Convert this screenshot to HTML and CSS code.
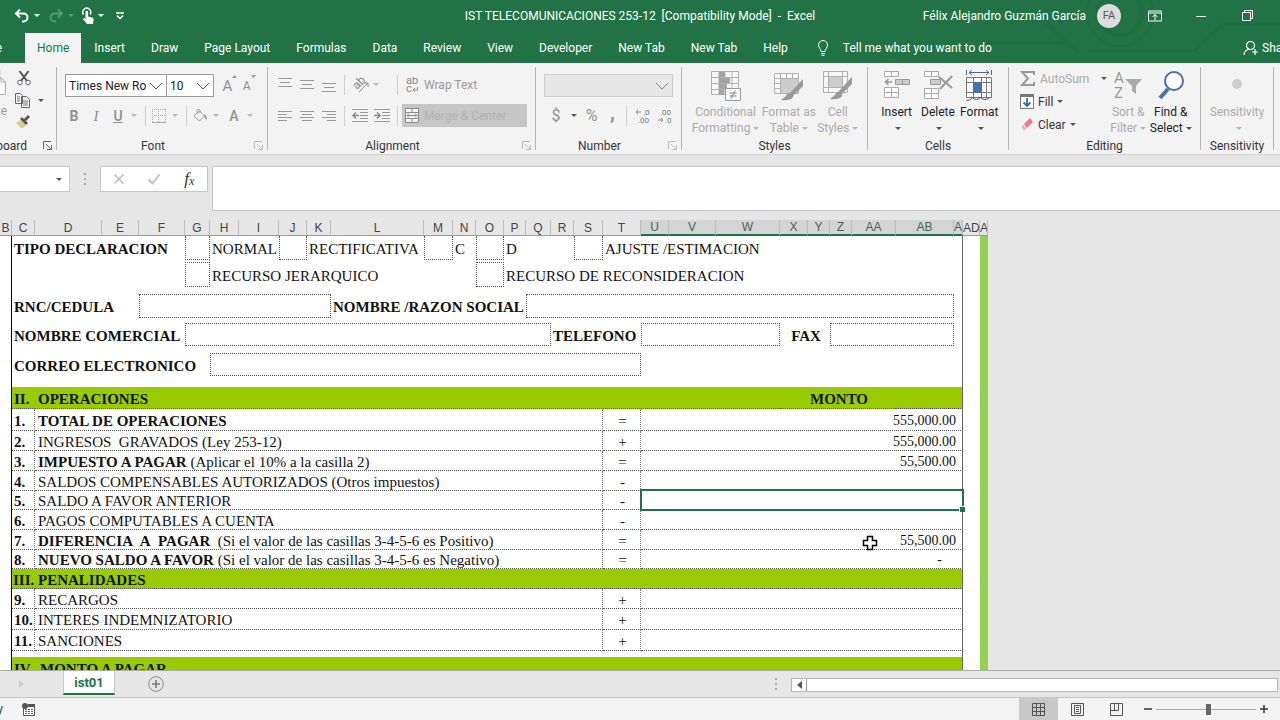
FILE: index.html
```html
<!DOCTYPE html>
<html lang="en">

<head>
    <meta charset="UTF-8">
    <meta name="viewport" content="width=device-width, initial-scale=1.0">
    <title>IST TELECOMUNICACIONES 253-12</title>
    <link rel="stylesheet" href="styles.css">
</head>

<body>
    <header class="top">
        <svg class="pattern" width="380" height="63" viewBox="0 0 380 63" aria-hidden="true">
            <g fill="none" stroke="#1f6e42" stroke-width="3">
                <circle cx="220" cy="13" r="33" stroke-width="2" />
                <circle cx="220" cy="13" r="22" stroke-width="4" />
                <path d="M80 43h85M188 51h105l30-27h57M145 22l32 30" />
            </g>
        </svg>
        <div class="titlebar">
            <div class="quick">
                <button type="button" class="q-btn" aria-label="Undo"><svg width="16" height="16" viewBox="0 0 16 16"><path d="M6 1.500L2 5.500l4 4M2 5.500h7.500a4 4 0 0 1 0 8H8" fill="none" stroke="#fff" stroke-width="2" /></svg></button>
                <i class="caret light"></i>
                <button type="button" class="q-btn faded" aria-label="Redo"><svg width="16" height="16" viewBox="0 0 16 16"><path d="M10 1.500l4 4-4 4M14 5.500H6.500a4 4 0 0 0 0 8H8" fill="none" stroke="#fff" stroke-width="2" /></svg></button>
                <i class="caret light faded"></i>
                <button type="button" class="q-btn touch" aria-label="Touch/Mouse Mode"><svg width="14" height="18" viewBox="0 0 14 18"><path d="M2.500 7.500a4 4 0 1 1 6.500 0" fill="none" stroke="#fff" stroke-width="1.500" /><path d="M4.500 5a1.300 1.300 0 0 1 2.600 0v4.500l4.500 1.200q1.200.4 1 1.800L12 17H6L2 12l1-1 1.500 1z" fill="#fff" /></svg></button>
                <i class="caret light"></i>
                <button type="button" class="q-btn" aria-label="Customize Quick Access Toolbar"><svg width="10" height="8" viewBox="0 0 10 8"><path d="M1 1h8M2 3.500l3 3 3-3" fill="none" stroke="#fff" stroke-width="1.300" /></svg></button>
            </div>
            <div class="title">IST TELECOMUNICACIONES 253-12&nbsp; [Compatibility Mode]&nbsp; -&nbsp; Excel</div>
            <div class="window">
                <span class="user">Félix Alejandro Guzmán García</span>
                <span class="avatar">FA</span>
                <button type="button" class="win-btn" aria-label="Ribbon Display Options"><svg width="14" height="12" viewBox="0 0 14 12"><path d="M.5 1h13v10H.500zM.5 3h13M7 10V4.500M4.500 7L7 4.500 9.500 7" fill="none" stroke="#fff" /></svg></button>
                <button type="button" class="win-btn" aria-label="Minimize"><svg width="10" height="10" viewBox="0 0 10 10"><path d="M0 5.500h10" stroke="#fff" /></svg></button>
                <button type="button" class="win-btn" aria-label="Restore Down"><svg width="11" height="11" viewBox="0 0 11 11"><path d="M.5 2.500h8v8h-8zM2.500 2.500v-2h8v8h-2" fill="none" stroke="#fff" /></svg></button>
            </div>
        </div>
        <nav class="tabs">
            <button type="button" class="tab file">File</button>
            <button type="button" class="tab active">Home</button>
            <button type="button" class="tab">Insert</button>
            <button type="button" class="tab">Draw</button>
            <button type="button" class="tab">Page Layout</button>
            <button type="button" class="tab">Formulas</button>
            <button type="button" class="tab">Data</button>
            <button type="button" class="tab">Review</button>
            <button type="button" class="tab">View</button>
            <button type="button" class="tab">Developer</button>
            <button type="button" class="tab">New Tab</button>
            <button type="button" class="tab">New Tab</button>
            <button type="button" class="tab">Help</button>
            <button type="button" class="tab tell"><svg width="12" height="16" viewBox="0 0 12 16"><path d="M4 11.500C4 9 1.500 8 1.500 5a4.500 4.500 0 0 1 9 0c0 3-2.500 4-2.500 6.500zM4 13.500h4M4.500 15.300h3" fill="none" stroke="#fff" /></svg>Tell me what you want to do</button>
            <button type="button" class="share"><svg width="16" height="16" viewBox="0 0 16 16"><path d="M1 15c0-3 1.500-4.500 4-5.500M3.500 5.500a4 4 0 1 1 8 0c0 2-1.500 4-4 4s-4-2-4-4zM12 9v6M9 12h6" fill="none" stroke="#fff" stroke-width="1.200" /></svg>Share</button>
        </nav>
    </header>

    <section class="ribbon">
        <div class="group clipboard">
            <div class="clip-body">
                <button type="button" class="paste"><svg width="18" height="30" viewBox="0 0 18 30"><path d="M5 8.500h7l4.500 4.500v12.500H5z" fill="#fafafa" stroke="#aaa" /><path d="M12 8.500V13h4.500" fill="none" stroke="#aaa" /><path d="M0 1h12v5H0z" fill="#ddd" /></svg>Paste</button>
                <div class="clip-col">
                    <button type="button" aria-label="Cut"><svg width="16" height="15" viewBox="-2 0 16 15"><path d="M2.500 0L10 10M11.500 0L4 10" stroke="#555" stroke-width="2" /><circle cx="3" cy="11.500" r="2.300" fill="none" stroke="#667" /><circle cx="11" cy="11.500" r="2.300" fill="none" stroke="#667" /></svg></button>
                    <button type="button" aria-label="Copy"><svg width="16" height="15" viewBox="0 0 16 15"><path d="M.5.500h5l2 2v8h-7zM6.500 3.500h5l3 3v8h-8z" fill="#f5f5f5" stroke="#666" /><path d="M2 4h3M2 6h3M2 8h3M8 8h5M8 10h5M8 12h5" stroke="#777" /></svg><i class="caret"></i></button>
                    <button type="button" aria-label="Format Painter"><svg width="16" height="14" viewBox="0 0 16 14"><path d="M1 8l5-3 5 5-3 3H6z" fill="#ddcb83" /><path d="M5 4l2-2 6 6-2 2zM9 4l4-4 2 2-4 4z" fill="#555" /></svg></button>
                </div>
            </div>
            <div class="group-name">Clipboard<svg class="launcher" width="9" height="9" viewBox="0 0 9 9"><path d="M.5 8V.500H8M3 3l5 5M8.500 4v4.500H4" fill="none" stroke="#666" /></svg></div>
        </div>

        <div class="group font has-launcher">
            <div class="line boxes">
                <select class="box font-name" aria-label="Font"><option>Times New Roman</option></select>
                <select class="box font-size" aria-label="Font Size"><option>10</option></select>
                <button type="button" class="tool grow" aria-label="Increase Font Size">A<svg width="5" height="4" viewBox="0 0 5 4"><path d="M0 3l2.500-3L5 3z" fill="#999" /></svg></button>
                <button type="button" class="tool shrink" aria-label="Decrease Font Size">A<svg width="5" height="4" viewBox="0 0 5 4"><path d="M0 0l2.500 3L5 0z" fill="#999" /></svg></button>
            </div>
            <div class="line">
                <button type="button" class="tool bold">B</button>
                <button type="button" class="tool italic">I</button>
                <button type="button" class="tool under">U</button>
                <i class="caret dim"></i>
                <i class="rule"></i>
                <button type="button" class="tool" aria-label="Borders"><svg width="14" height="14" viewBox="0 0 14 14"><path d="M0 .5h14M0 6.500h14M.5 0v14M6.500 0v14M13.500 0v14" stroke="#aaa" stroke-dasharray="1 1" /><path d="M0 13.500h14" stroke="#aaa" /></svg></button>
                <i class="caret dim"></i>
                <i class="rule"></i>
                <button type="button" class="tool" aria-label="Fill Color"><svg width="15" height="14" viewBox="0 0 15 14"><path d="M1 7l5.500-5 5 5L6.500 12zM4 4V1q1.500-2 3 0v3" fill="none" stroke="#999" /><path d="M11 5q4 2 2.500 6Q11 9 11 5z" fill="#999" /></svg></button>
                <i class="caret dim"></i>
                <button type="button" class="tool fontcolor">A</button>
                <i class="caret dim"></i>
            </div>
            <div class="group-name">Font<svg class="launcher" width="9" height="9" viewBox="0 0 9 9"><path d="M.5 8V.500H8M3 3l5 5M8.500 4v4.500H4" fill="none" stroke="#bbb" /></svg></div>
        </div>

        <div class="group alignment has-launcher">
            <div class="line">
                <button type="button" class="tool" aria-label="Top Align"><svg width="14" height="15" viewBox="0 0 14 15"><path d="M0 1.500h14M2 5.500h10M0 9.500h14" stroke="#999" /></svg></button>
                <button type="button" class="tool" aria-label="Middle Align"><svg width="14" height="15" viewBox="0 0 14 15"><path d="M0 3.500h14M2 7.500h10M0 11.500h14" stroke="#999" /></svg></button>
                <button type="button" class="tool" aria-label="Bottom Align"><svg width="14" height="15" viewBox="0 0 14 15"><path d="M0 6.500h14M2 10.500h10M0 14.500h14" stroke="#999" /></svg></button>
                <i class="rule"></i>
                <button type="button" class="tool" aria-label="Orientation"><svg width="17" height="16" viewBox="0 0 17 16"><text transform="translate(5 13) rotate(-45)" font-size="12" fill="#888">ab</text><path d="M7 15l9-9M12 6h4v4" fill="none" stroke="#888" /></svg></button>
                <i class="caret dim"></i>
                <i class="rule far"></i>
                <button type="button" class="wrap"><svg width="13" height="16" viewBox="0 0 13 16"><text x="0" y="7" font-size="11" fill="#888">ab</text><text x="0" y="15" font-size="11" fill="#888">c</text><path d="M11.500 10v3H7.500M9 11l-2 2 2 2" fill="none" stroke="#888" /></svg>Wrap Text</button>
            </div>
            <div class="line">
                <button type="button" class="tool" aria-label="Align Left"><svg width="14" height="12" viewBox="0 0 14 12"><path d="M0 1.500h14M0 4.500h9M0 7.500h14M0 10.500h9" stroke="#999" /></svg></button>
                <button type="button" class="tool" aria-label="Center"><svg width="14" height="12" viewBox="0 0 14 12"><path d="M0 1.500h14M2 4.500h10M0 7.500h14M2 10.500h10" stroke="#999" /></svg></button>
                <button type="button" class="tool" aria-label="Align Right"><svg width="14" height="12" viewBox="0 0 14 12"><path d="M0 1.500h14M5 4.500h9M0 7.500h14M5 10.500h9" stroke="#999" /></svg></button>
                <i class="rule"></i>
                <button type="button" class="tool" aria-label="Decrease Indent"><svg width="16" height="13" viewBox="0 0 16 13"><path d="M0 .5h16M8 3.500h8M8 6.500h8M8 9.500h8M0 12.500h16" stroke="#999" /><path d="M7 6.500H1M4 3.500l-3 3 3 3" fill="none" stroke="#888" stroke-width="1.500" /></svg></button>
                <button type="button" class="tool" aria-label="Increase Indent"><svg width="16" height="13" viewBox="0 0 16 13"><path d="M0 .5h16M8 3.500h8M8 6.500h8M8 9.500h8M0 12.500h16" stroke="#999" /><path d="M0 6.500h6M3 3.500l3 3-3 3" fill="none" stroke="#888" stroke-width="1.500" /></svg></button>
                <i class="rule"></i>
                <button type="button" class="merge"><svg width="14" height="15" viewBox="0 0 14 15"><path d="M.5.500h13v14H.500zM.5 4.500h13M.5 10.500h13M7 .5v4M7 10.500v4" fill="#f5f5f5" stroke="#8a8a8a" /><path d="M2 7.500h10M4 5.500l-2 2 2 2M10 5.500l2 2-2 2" fill="none" stroke="#8a8a8a" /></svg>Merge &amp; Center</button>
            </div>
            <div class="group-name">Alignment<svg class="launcher" width="9" height="9" viewBox="0 0 9 9"><path d="M.5 8V.500H8M3 3l5 5M8.500 4v4.500H4" fill="none" stroke="#bbb" /></svg></div>
        </div>

        <div class="group number has-launcher">
            <div class="line boxes">
                <select class="box format" aria-label="Number Format" disabled><option></option></select>
            </div>
            <div class="line">
                <button type="button" class="tool sign">$</button>
                <i class="caret"></i>
                <button type="button" class="tool sign">%</button>
                <button type="button" class="tool comma">,</button>
                <i class="rule"></i>
                <button type="button" class="tool" aria-label="Increase Decimal"><svg width="15" height="14" viewBox="0 0 15 14"><text x="8" y="6" font-size="8" fill="#777">.0</text><text x="3" y="14" font-size="8" fill="#777">.00</text><path d="M6 3H1M3 1L1 3l2 2" fill="none" stroke="#888" /></svg></button>
                <button type="button" class="tool" aria-label="Decrease Decimal"><svg width="15" height="14" viewBox="0 0 15 14"><text x="3" y="6" font-size="8" fill="#777">.00</text><text x="8" y="14" font-size="8" fill="#777">.0</text><path d="M1 11h5M4 9l2 2-2 2" fill="none" stroke="#888" /></svg></button>
            </div>
            <div class="group-name">Number<svg class="launcher" width="9" height="9" viewBox="0 0 9 9"><path d="M.5 8V.500H8M3 3l5 5M8.500 4v4.500H4" fill="none" stroke="#bbb" /></svg></div>
        </div>

        <div class="group styles">
            <div class="bigs">
                <button type="button" class="big dim wide"><svg width="30" height="31" viewBox="0 0 30 31"><path d="M.5 1.500h27v23H.500zM.5 7.500h27M.5 13.500h27M.5 19.500h27M8 1.500v23M14 1.500v23M21 1.500v23" fill="#f8f8f8" stroke="#b0b0b0" /><path d="M8 2h6v5H8zM8 8h11v5H8zM8 14h8v5H8zM8 20h5v5H8z" fill="#a4a4a4" /><path d="M14.500 18.500h15v12h-15z" fill="#f8f8f8" stroke="#999" /><path d="M18.500 23h7M18.500 26h7M24 20.500l-4 8" stroke="#888" /></svg><span>Conditional<br>Formatting<i class="caret dim"></i></span></button>
                <button type="button" class="big dim"><svg width="30" height="31" viewBox="0 0 30 31"><path d="M.5 3.500h24v20H.500zM.5 8.500h24M.5 13.500h24M.5 18.500h24M6.500 3.500v20M12.500 3.500v20M18.500 3.500v20" fill="#f8f8f8" stroke="#b0b0b0" /><path d="M7 9h17v14H7z" fill="#ccc" /><path d="M29 9v7l-11 11-3-3z" fill="#999" /><path d="M14 23q5 0 5 4-3 4-12 3 4-2 7-7z" fill="#999" /></svg><span>Format as<br>Table<i class="caret dim"></i></span></button>
                <button type="button" class="big dim slim"><svg width="30" height="31" viewBox="0 0 30 31"><path d="M.5 1.500h24v21H.500zM.5 6.500h24M.5 17.500h24M5.500 1.500v21M19.500 1.500v21" fill="#f8f8f8" stroke="#b0b0b0" /><path d="M6 7h13v10H6z" fill="#ccc" /><path d="M29 7v7L18 25l-3-3z" fill="#999" /><path d="M14 22q5 0 5 4-3 4-12 3 4-2 7-7z" fill="#999" /></svg><span>Cell<br>Styles<i class="caret dim"></i></span></button>
            </div>
            <div class="group-name">Styles</div>
        </div>

        <div class="group cells">
            <div class="bigs">
                <button type="button" class="big slim"><svg width="28" height="31" viewBox="0 0 28 31"><path d="M1.500 1.500h14v5h-14zM8.500 1.500v5M1.500 17.500h14v10h-14zM1.500 22.500h14M8.500 17.500v10" fill="#fff" stroke="#aaa" /><path d="M12.500 9.500h14v5h-14z" fill="#ccc" stroke="#999" /><path d="M19.500 9.500v5" stroke="#999" /><path d="M9 12H3M5.500 9L2.500 12l3 3" fill="none" stroke="#999" stroke-width="1.500" /></svg><span>Insert<br><i class="caret"></i></span></button>
                <button type="button" class="big slim"><svg width="30" height="31" viewBox="0 0 30 31"><path d="M1.500 1.500h14v5h-14zM8.500 1.500v5M1.500 18.500h14v10h-14zM1.500 23.500h14M8.500 18.500v10" fill="#fff" stroke="#aaa" /><path d="M7.500 9.500h10v5h-10z" fill="#ccc" stroke="#999" /><path d="M16 7l13 11M29 6L17 19" stroke="#999" stroke-width="2" /></svg><span>Delete<br><i class="caret"></i></span></button>
                <button type="button" class="big slim"><svg width="28" height="31" viewBox="0 0 28 31"><path d="M1.500 0v5M26.500 0v5M4 2.500h20M7 0L4 2.500 7 5M21 0l3 2.500L21 5" fill="none" stroke="#44689c" /><path d="M1.500 7.500h25v20h-25zM1.500 12.500h25M1.500 22.500h25M8.500 7.500v20M16.500 7.500v20M21.500 7.500v20" fill="#fff" stroke="#777" /><path d="M8 12h9v11H8z" fill="#4472b0" /><path d="M1.500 30.500q5 0 6-3 4 4 8 0 4 4 9 0" fill="none" stroke="#555" /></svg><span>Format<br><i class="caret"></i></span></button>
            </div>
            <div class="group-name">Cells</div>
        </div>

        <div class="group editing">
            <div class="edit-body">
                <div class="edit-col">
                    <button type="button" class="row-btn dim"><svg width="16" height="15" viewBox="0 0 16 15"><path d="M14 4V1H2l6 6.500L2 14h12v-3" fill="none" stroke="#999" stroke-width="2" /></svg>AutoSum<i class="caret"></i></button>
                    <button type="button" class="row-btn"><svg width="14" height="15" viewBox="0 0 14 15"><path d="M.5.500h13v14H.500z" fill="#fff" stroke="#777" /><path d="M0 0h14v3H0z" fill="#777" /><path d="M7 4v8M3.500 8.500L7 12l3.500-3.500" fill="none" stroke="#3a679f" stroke-width="1.800" /></svg>Fill<i class="caret"></i></button>
                    <button type="button" class="row-btn"><svg width="14" height="13" viewBox="0 0 14 13"><path d="M4 6l6-6 3 4-6 6z" fill="#e8798f" /><path d="M3.500 6.500l3 4L4 12.500 1.500 9z" fill="#f2b4bf" /></svg>Clear<i class="caret"></i></button>
                </div>
                <button type="button" class="big dim slim"><svg width="30" height="31" viewBox="0 0 30 31"><text x="1" y="13" font-size="15" fill="#999">A</text><text x="1" y="28" font-size="15" fill="#999">Z</text><path d="M12 9h17l-6 7v8l-4-3v-5z" fill="#aaa" /></svg><span>Sort &amp;<br>Filter<i class="caret dim"></i></span></button>
                <button type="button" class="big slim"><svg width="28" height="31" viewBox="0 0 28 31"><path d="M11 19L3 28" stroke="#4a6fa5" stroke-width="4" /><circle cx="17" cy="11" r="9" fill="#fdfdfd" stroke="#4a6fa5" stroke-width="2" /></svg><span>Find &amp;<br>Select<i class="caret"></i></span></button>
            </div>
            <div class="group-name">Editing</div>
        </div>

        <div class="group sensitivity">
            <div class="bigs">
                <button type="button" class="big dim wide"><svg width="28" height="31" viewBox="0 0 28 31"><circle cx="14" cy="14" r="5" fill="#ccc" /></svg><span>Sensitivity<br><i class="caret dim"></i></span></button>
            </div>
            <div class="group-name">Sensitivity</div>
        </div>
    </section>

    <section class="formula">
        <div class="namebox"><input type="text" aria-label="Name Box"><i class="caret"></i></div>
        <i class="dots"></i>
        <div class="fx">
            <button type="button" aria-label="Cancel"><svg width="12" height="12" viewBox="0 0 12 12"><path d="M1.500 1.500l9 9M10.500 1.500l-9 9" stroke="#bbb" stroke-width="1.500" /></svg></button>
            <button type="button" aria-label="Enter"><svg width="14" height="12" viewBox="0 0 14 12"><path d="M1.500 6.500l4 4 7-9" fill="none" stroke="#bbb" stroke-width="1.800" /></svg></button>
            <button type="button" class="fn">f<small>x</small></button>
        </div>
        <textarea class="formula-text" aria-label="Formula Bar"></textarea>
    </section>

    <main class="sheet">
        <table class="grid">
            <colgroup>
                <col class="w12"><col class="w23"><col class="w67"><col class="w37"><col class="w46"><col class="w25">
                <col class="w29"><col class="w40"><col class="w28"><col class="w24"><col class="w93"><col class="w29">
                <col class="w23"><col class="w28"><col class="w22"><col class="w25"><col class="w23"><col class="w29">
                <col class="w38"><col class="w28"><col class="w47"><col class="w64"><col class="w28"><col class="w22">
                <col class="w22"><col class="w44"><col class="w58"><col class="w9"><col class="w17"><col class="w8">
            </colgroup>
            <thead>
                <tr>
                    <th>B</th><th>C</th><th>D</th><th>E</th><th>F</th><th>G</th><th>H</th><th>I</th><th>J</th><th>K</th>
                    <th>L</th><th>M</th><th>N</th><th>O</th><th>P</th><th>Q</th><th>R</th><th>S</th><th>T</th>
                    <th class="sel">U</th><th class="sel">V</th><th class="sel">W</th><th class="sel">X</th><th class="sel">Y</th>
                    <th class="sel">Z</th><th class="sel">AA</th><th class="sel">AB</th><th class="sel cut">AC</th>
                    <th>AD</th><th class="cut">AE</th>
                </tr>
            </thead>
            <tbody>
                <!-- I. Datos generales -->
                <tr class="h24">
                    <td class="edge"></td><td colspan="4" class="b">TIPO DECLARACION</td><td class="bx open"></td>
                    <td colspan="2">NORMAL</td><td class="bx open"></td><td colspan="2">RECTIFICATIVA</td><td class="bx open"></td>
                    <td>C</td><td class="bx open"></td><td colspan="3">D</td><td class="bx open"></td>
                    <td colspan="10" class="last">AJUSTE /ESTIMACION</td><td></td><td class="strip"></td>
                </tr>
                <tr class="h2"><td class="edge"></td><td colspan="27" class="last"></td><td></td><td class="strip"></td></tr>
                <tr class="h25">
                    <td class="edge"></td><td colspan="4"></td><td class="bx"></td><td colspan="7">RECURSO JERARQUICO</td>
                    <td class="bx"></td><td colspan="14" class="last">RECURSO DE RECONSIDERACION</td><td></td><td class="strip"></td>
                </tr>
                <tr class="h7"><td class="edge"></td><td colspan="27" class="last"></td><td></td><td class="strip"></td></tr>
                <tr class="h24">
                    <td class="edge"></td><td colspan="3" class="b">RNC/CEDULA</td><td colspan="6" class="bx"></td>
                    <td colspan="5" class="b">NOMBRE /RAZON SOCIAL</td><td colspan="12" class="bx"></td><td class="last"></td>
                    <td></td><td class="strip"></td>
                </tr>
                <tr class="h5"><td class="edge"></td><td colspan="27" class="last"></td><td></td><td class="strip"></td></tr>
                <tr class="h23">
                    <td class="edge"></td><td colspan="4" class="b">NOMBRE COMERCIAL</td><td colspan="11" class="bx"></td>
                    <td colspan="3" class="b">TELEFONO</td><td colspan="3" class="bx"></td><td colspan="2" class="b mid">FAX</td>
                    <td colspan="3" class="bx"></td><td class="last"></td><td></td><td class="strip"></td>
                </tr>
                <tr class="h7"><td class="edge"></td><td colspan="27" class="last"></td><td></td><td class="strip"></td></tr>
                <tr class="h23">
                    <td class="edge"></td><td colspan="5" class="b">CORREO ELECTRONICO</td><td colspan="13" class="bx"></td>
                    <td colspan="9" class="last"></td><td></td><td class="strip"></td>
                </tr>
                <tr class="h11"><td class="edge"></td><td colspan="27" class="last"></td><td></td><td class="strip"></td></tr>

                <!-- II. Operaciones -->
                <tr class="h22 band">
                    <td class="edge"></td><td class="g b">II.</td><td colspan="20" class="g b l">OPERACIONES</td>
                    <td colspan="4" class="g b mid">MONTO</td><td colspan="2" class="g last"></td><td></td><td class="strip"></td>
                </tr>
                <tr class="h22 item"><td class="edge"></td><td class="n">1.</td><td colspan="16" class="l"><b>TOTAL DE OPERACIONES</b></td><td class="o">=</td><td colspan="9" class="v last">555,000.00</td><td></td><td class="strip"></td></tr>
                <tr class="h20 item"><td class="edge"></td><td class="n">2.</td><td colspan="16" class="l">INGRESOS&nbsp; GRAVADOS (Ley 253-12)</td><td class="o">+</td><td colspan="9" class="v last">555,000.00</td><td></td><td class="strip"></td></tr>
                <tr class="h20 item"><td class="edge"></td><td class="n">3.</td><td colspan="16" class="l"><b>IMPUESTO A PAGAR</b> (Aplicar el 10% a la casilla 2)</td><td class="o">=</td><td colspan="9" class="v last">55,500.00</td><td></td><td class="strip"></td></tr>
                <tr class="h20 item"><td class="edge"></td><td class="n">4.</td><td colspan="16" class="l">SALDOS COMPENSABLES AUTORIZADOS (Otros impuestos)</td><td class="o">-</td><td colspan="9" class="v last"></td><td></td><td class="strip"></td></tr>
                <tr class="h19 item"><td class="edge"></td><td class="n">5.</td><td colspan="16" class="l">SALDO A FAVOR ANTERIOR</td><td class="o">-</td><td colspan="9" class="v last selected"></td><td></td><td class="strip"></td></tr>
                <tr class="h20 item"><td class="edge"></td><td class="n">6.</td><td colspan="16" class="l">PAGOS COMPUTABLES A CUENTA</td><td class="o">-</td><td colspan="9" class="v last"></td><td></td><td class="strip"></td></tr>
                <tr class="h20 item"><td class="edge"></td><td class="n">7.</td><td colspan="16" class="l"><b>DIFERENCIA&nbsp; A&nbsp; PAGAR</b>&nbsp; (Si el valor de las casillas 3-4-5-6 es Positivo)</td><td class="o">=</td><td colspan="9" class="v last">55,500.00</td><td></td><td class="strip"></td></tr>
                <tr class="h19 item"><td class="edge"></td><td class="n">8.</td><td colspan="16" class="l"><b>NUEVO SALDO A FAVOR</b> (Si el valor de las casillas 3-4-5-6 es Negativo)</td><td class="o">=</td><td colspan="9" class="v last zero">-</td><td></td><td class="strip"></td></tr>

                <!-- III. Penalidades -->
                <tr class="h20 band"><td class="edge"></td><td class="g b tight">III.</td><td colspan="26" class="g b l last">PENALIDADES</td><td></td><td class="strip"></td></tr>
                <tr class="h20 item"><td class="edge"></td><td class="n">9.</td><td colspan="16" class="l">RECARGOS</td><td class="o">+</td><td colspan="9" class="v last"></td><td></td><td class="strip"></td></tr>
                <tr class="h21 item"><td class="edge"></td><td class="n">10.</td><td colspan="16" class="l">INTERES INDEMNIZATORIO</td><td class="o">+</td><td colspan="9" class="v last"></td><td></td><td class="strip"></td></tr>
                <tr class="h21 item"><td class="edge"></td><td class="n">11.</td><td colspan="16" class="l">SANCIONES</td><td class="o">+</td><td colspan="9" class="v last"></td><td></td><td class="strip"></td></tr>
                <tr class="h6"><td class="edge"></td><td colspan="27" class="last"></td><td></td><td class="strip"></td></tr>

                <!-- IV. Monto a pagar -->
                <tr class="h22 band"><td class="edge"></td><td colspan="27" class="g b last">IV.&nbsp; MONTO A PAGAR</td><td></td><td class="strip"></td></tr>
            </tbody>
        </table>
        <svg class="pointer" width="16" height="16" viewBox="0 0 16 16" aria-hidden="true"><path d="M5.500 1.500h5v4h4v5h-4v4h-5v-4h-4v-5h4z" fill="#fff" stroke="#000" stroke-width="1.500" /></svg>
    </main>

    <section class="sheetbar">
        <button type="button" class="next" aria-label="Next sheet"><svg width="5" height="8" viewBox="0 0 5 8"><path d="M0 0l5 4-5 4z" fill="#ccc" /></svg></button>
        <button type="button" class="sheet-tab">ist01</button>
        <button type="button" class="add" aria-label="New sheet"><svg width="16" height="16" viewBox="0 0 16 16"><circle cx="8" cy="8" r="7.300" fill="none" stroke="#888" /><path d="M4 8h8M8 4v8" stroke="#777" stroke-width="1.500" /></svg></button>
        <div class="scroll-side">
            <i class="dots"></i>
            <div class="scroll">
                <button type="button" aria-label="Scroll left"><svg width="5" height="8" viewBox="0 0 5 8"><path d="M5 0L0 4l5 4z" fill="#555" /></svg></button>
                <div class="thumb"></div>
            </div>
        </div>
    </section>

    <footer class="status">
        <span class="ready">Ready</span>
        <button type="button" class="macro" aria-label="Record Macro"><svg width="13" height="13" viewBox="0 0 13 13"><path d="M1.500 3.500h11v9h-11z" fill="#fff" stroke="#555" /><path d="M6 1h7v3H6z" fill="#555" /><circle cx="3" cy="3" r="3" fill="#555" /><path d="M3 6.500h8M3 8.500h8M3 10.500h8" stroke="#666" stroke-dasharray="2 1" /></svg></button>
        <div class="views">
            <button type="button" class="view on" aria-label="Normal"><svg width="13" height="13" viewBox="0 0 13 13"><path d="M.5.500h12v12H.500zM.5 4.500h12M.5 8.500h12M4.500.500v12M8.500.500v12" fill="none" stroke="#555" /></svg></button>
            <button type="button" class="view" aria-label="Page Layout view"><svg width="13" height="13" viewBox="0 0 13 13"><path d="M.5.500h12v12H.500zM3.500 2.500h6v8h-6zM5 4.500h3M5 6.500h3M5 8.500h3" fill="none" stroke="#555" /></svg></button>
            <button type="button" class="view" aria-label="Page Break Preview"><svg width="13" height="13" viewBox="0 0 13 13"><path d="M.5.500h12v12H.500zM.5 7.500h8v-7M4.500.500v7" fill="none" stroke="#555" /></svg></button>
            <div class="zoom-box">
                <button type="button" class="zoom-btn" aria-label="Zoom out"><svg width="8" height="8" viewBox="0 0 8 8"><path d="M0 4h8" stroke="#333" stroke-width="1.500" /></svg></button>
                <input type="range" class="zoom" min="0" max="100" value="53" aria-label="Zoom">
                <button type="button" class="zoom-btn" aria-label="Zoom in"><svg width="8" height="8" viewBox="0 0 8 8"><path d="M0 4h8M4 0v8" stroke="#333" stroke-width="1.500" /></svg></button>
            </div>
        </div>
    </footer>
</body>

</html>
```

FILE: styles.css
```css
* {
    box-sizing: border-box;
}

body {
    margin: 0;
    height: 100vh;
    display: flex;
    flex-direction: column;
    overflow: hidden;
    font-family: Roboto, "Noto Sans", sans-serif;
    font-size: 12px;
    line-height: 16px;
    color: #333;
    background-color: #e6e6e6;
}

button {
    margin: 0;
    padding: 0;
    border: none;
    background: none;
    font: inherit;
    color: inherit;
    white-space: nowrap;
    display: flex;
    align-items: center;
    justify-content: center;
}

svg {
    display: block;
    flex: none;
}

/* title bar and tabs */
.top {
    position: relative;
    flex: none;
    background-color: #217346;
    color: #fff;
}

.pattern {
    position: absolute;
    right: 0;
    top: 0;
}

.titlebar {
    position: relative;
    height: 33px;
    padding-bottom: 2px;
    display: grid;
    grid-template-columns: 1fr auto 1fr;
    align-items: center;
}

.quick {
    display: flex;
    align-items: center;
    padding-left: 12px;
}

.q-btn {
    width: 20px;
    height: 24px;
}

.q-btn.touch {
    width: 16px;
}

.quick .caret {
    margin: 0 6px 0 2px;
}

.faded {
    opacity: 0.25;
}

.window {
    display: flex;
    align-items: center;
    justify-content: flex-end;
    padding-right: 10px;
}

.avatar {
    width: 24px;
    height: 24px;
    margin: 0 11px 0 11px;
    border-radius: 50%;
    background-color: #dcdcdc;
    color: #555;
    font-size: 11px;
    line-height: 24px;
    text-align: center;
}

.win-btn {
    width: 46px;
    height: 24px;
}

.tabs {
    position: relative;
    height: 30px;
    display: flex;
}

.tab {
    padding: 0 13px;
}

.tab.file {
    width: 25px;
    padding: 0 23px 0 0;
    justify-content: flex-end;
    overflow: hidden;
}

.tab.active {
    padding: 0 12px;
    background-color: #f3f3f3;
    color: #217346;
}

.tab.tell {
    gap: 14px;
    padding-left: 16px;
}

.share {
    flex: none;
    width: 37px;
    margin-left: auto;
    gap: 3px;
    justify-content: flex-start;
    overflow: hidden;
}

.caret {
    flex: none;
    display: inline-block;
    width: 6px;
    height: 3px;
    border: 3px solid transparent;
    border-top-color: #555;
    border-bottom: none;
}

.caret.light {
    border-top-color: #fff;
}

.caret.dim {
    border-top-color: #bbb;
}

/* ribbon */
.ribbon {
    flex: none;
    height: 91px;
    display: flex;
    background-color: #f3f3f3;
    overflow: hidden;
}

.group {
    position: relative;
    flex: none;
    margin: 4px 0;
    padding: 0 8px;
    border-right: 1px solid #b4b4b4;
    display: flex;
    flex-direction: column;
}

.group-name {
    margin: auto 0 -4px;
    text-align: center;
}

.has-launcher .group-name {
    padding-right: 18px;
}

.launcher {
    position: absolute;
    right: 4px;
    bottom: 0;
}

.clipboard {
    width: 57px;
    padding: 0;
    overflow-x: clip;
}

.clip-body {
    display: flex;
    justify-content: flex-end;
}

.paste {
    flex-direction: column;
    align-items: flex-end;
    color: #999;
    gap: 4px;
    padding-bottom: 12px;
}

.clip-col {
    flex: none;
    width: 41px;
    margin-left: 8px;
    display: flex;
    flex-direction: column;
}

.clip-col button {
    height: 22px;
    gap: 7px;
    justify-content: flex-start;
}

.clipboard .group-name {
    display: flex;
    justify-content: flex-end;
    padding-right: 29px;
}

.font {
    width: 211px;
}

.alignment {
    width: 268px;
}

.number {
    width: 146px;
}

.styles {
    width: 186px;
}

.cells {
    width: 141px;
}

.editing {
    width: 192px;
}

.sensitivity {
    width: 73px;
    padding: 0;
}

.line {
    height: 31px;
    display: flex;
    align-items: center;
    margin: 0 -2px;
    padding-top: 4px;
}

.line.boxes {
    margin: 0;
    height: 33px;
}

.line + .line {
    padding-top: 0;
}

.alignment .line:first-child {
    height: 33px;
    padding-top: 2px;
}

.number .line + .line {
    margin-left: 1px;
}

.box {
    height: 23px;
    padding: 0 20px 0 3px;
    border: 1px solid #999;
    border-radius: 0;
    appearance: none;
    background: #fff url("data:image/svg+xml,%3Csvg xmlns='http://www.w3.org/2000/svg' width='14' height='8'%3E%3Cpath d='M1 1l6 6 6-6' fill='none' stroke='%23555'/%3E%3C/svg%3E") no-repeat right 3px center;
    font: inherit;
    color: #222;
    text-overflow: clip;
}

.font-name {
    width: 102px;
}

.font-size {
    width: 51px;
    margin-left: -1px;
}

.format {
    width: 130px;
    background-color: #e3e3e3;
    border-color: #bbb;
    opacity: 0.7;
}

.tool {
    width: 22px;
    height: 22px;
    color: #909090;
}

.grow {
    font-size: 15px;
    margin-left: 6px;
}

.grow svg,
.shrink svg {
    align-self: flex-start;
}

.bold {
    font-size: 14px;
    font-weight: 700;
}

.italic {
    font-family: "Liberation Serif", serif;
    font-style: italic;
    font-size: 15px;
}

.under {
    font-size: 14px;
    font-weight: 500;
    text-decoration: underline;
}

.fontcolor {
    font-weight: 500;
    font-size: 14px;
}

.sign {
    font-size: 16px;
}

.comma {
    font-size: 20px;
    font-weight: 700;
    padding-bottom: 8px;
}

.rule {
    flex: none;
    width: 1px;
    height: 20px;
    margin: 0 4px;
    background-color: #d0d0d0;
}

.font .caret,
.alignment .caret {
    margin: 0 4px 0 2px;
}

.number .caret {
    margin: 0 4px;
}

.number .tool.comma {
    width: 20px;
}

.font .rule {
    margin: 0 2px 0 4px;
}

.rule.far {
    margin: 0 8px 0 14px;
}

.wrap {
    gap: 5px;
    color: #999;
}

.merge {
    width: 125px;
    height: 23px;
    padding-left: 3px;
    gap: 5px;
    justify-content: flex-start;
    background-color: #c6c6c6;
    color: #b2b2b2;
}

.bigs {
    display: flex;
    justify-content: center;
}

.big {
    width: 56px;
    flex-direction: column;
    gap: 3px;
    padding-top: 3px;
    color: #222;
}

.big.wide {
    width: 72px;
}

.big.slim {
    width: 43px;
}

.big .caret {
    margin-left: 3px;
    vertical-align: middle;
}

.big.dim,
.row-btn.dim {
    color: #aaa;
}

.edit-body {
    display: flex;
}

.edit-col {
    width: 90px;
    display: flex;
    flex-direction: column;
}

.row-btn {
    height: 23px;
    gap: 4px;
    padding-left: 3px;
    justify-content: flex-start;
}

.row-btn.dim .caret {
    margin-left: 8px;
}

/* formula bar */
.formula {
    flex: none;
    display: flex;
    align-items: flex-start;
    height: 66px;
    padding-top: 11px;
    border-top: 1px solid #d2d2d2;
}

.namebox {
    width: 70px;
    height: 26px;
    display: flex;
    align-items: center;
    padding-right: 7px;
    background-color: #fff;
    border: 1px solid #c6c6c6;
    border-left: none;
}

.namebox input {
    flex: 1;
    min-width: 0;
    border: none;
    outline: none;
}

.dots {
    flex: none;
    width: 2px;
    height: 12px;
    margin: 7px 14px 0;
    background: repeating-linear-gradient(#aaa 0 2px, transparent 2px 5px);
}

.fx {
    width: 108px;
    height: 26px;
    margin-right: 4px;
    display: flex;
    background-color: #fff;
    border: 1px solid #c6c6c6;
}

.fx button {
    flex: 1;
}

.fn {
    font-family: "Liberation Serif", serif;
    font-style: italic;
    font-size: 17px;
}

.fn small {
    font-size: 12px;
    padding-top: 4px;
}

.formula-text {
    flex: 1;
    height: 45px;
    border: 1px solid #c6c6c6;
    border-right: none;
    outline: none;
    resize: none;
}

/* sheet */
.sheet {
    position: relative;
    flex: 1;
    min-height: 0;
    overflow: hidden;
}

.grid {
    table-layout: fixed;
    width: 988px;
    border-collapse: separate;
    border-spacing: 0;
    background-color: #fff;
    font-family: "Liberation Serif", "Times New Roman", serif;
    font-size: 15px;
    line-height: 16px;
    color: #111;
}

.grid th {
    height: 16px;
    padding: 0;
    background-color: #e6e6e6;
    border-right: 1px solid #bcbcbc;
    border-bottom: 1px solid #9a9a9a;
    font-family: "Liberation Sans", Arial, sans-serif;
    font-size: 12px;
    font-weight: 400;
    line-height: 14px;
    color: #444;
    white-space: nowrap;
}

.grid th.sel {
    background-color: #d3d5d4;
    border-bottom: 2px solid #217346;
    color: #4a6156;
}

.grid th.cut {
    overflow: hidden;
}

.grid td {
    padding: 2px 0 0 2px;
    white-space: nowrap;
    vertical-align: middle;
}

.grid .edge {
    padding: 0;
    border-right: 1px solid #000;
}

.grid .last {
    border-right: 1px solid #666;
}

.grid .strip {
    padding: 0;
    background-color: #92d050;
}

.grid .bx {
    padding: 0;
    border: 1px dotted #555;
}

.grid .bx.open {
    border-top: none;
}

.grid .b,
.grid .n {
    font-weight: 700;
}

.grid .g {
    background-color: #99cc00;
    border-bottom: 1px dotted #555;
}

.grid .l {
    padding-left: 3px;
}

.grid .mid {
    text-align: center;
}

.grid .tight {
    padding-left: 1px;
}

.item .n,
.item .l,
.item .o {
    border-right: 1px dotted #777;
    border-bottom: 1px dotted #555;
}

.item .o {
    text-align: center;
}

.item .v {
    padding-right: 6px;
    border-bottom: 1px dotted #555;
    font-size: 14px;
    text-align: right;
}

.item .zero {
    padding-right: 20px;
}

.selected {
    position: relative;
}

.selected::before {
    content: "";
    position: absolute;
    inset: -2px -2px -2px -1px;
    border: 2px solid #217346;
}

.selected::after {
    content: "";
    position: absolute;
    right: -3px;
    bottom: -3px;
    width: 5px;
    height: 5px;
    background-color: #217346;
    border: 1px solid #fff;
    border-right: none;
    border-bottom: none;
}

.pointer {
    position: absolute;
    left: 862px;
    top: 315px;
}

.w8 { width: 8px; }
.w9 { width: 9px; }
.w12 { width: 12px; }
.w17 { width: 17px; }
.w22 { width: 22px; }
.w23 { width: 23px; }
.w24 { width: 24px; }
.w25 { width: 25px; }
.w28 { width: 28px; }
.w29 { width: 29px; }
.w37 { width: 37px; }
.w38 { width: 38px; }
.w40 { width: 40px; }
.w44 { width: 44px; }
.w46 { width: 46px; }
.w47 { width: 47px; }
.w58 { width: 58px; }
.w64 { width: 64px; }
.w67 { width: 67px; }
.w93 { width: 93px; }

.h2 { height: 2px; }
.h5 { height: 5px; }
.h6 { height: 6px; }
.h7 { height: 7px; }
.h11 { height: 11px; }
.h19 { height: 19px; }
.h20 { height: 20px; }
.h21 { height: 21px; }
.h22 { height: 22px; }
.h23 { height: 23px; }
.h24 { height: 24px; }
.h25 { height: 25px; }

/* sheet tabs */
.sheetbar {
    flex: none;
    height: 28px;
    display: flex;
    align-items: flex-start;
    border-top: 1px solid #ababab;
    border-bottom: 1px solid #c6c6c6;
}

.next {
    width: 5px;
    height: 26px;
    margin: 0 39px 0 19px;
}

.sheet-tab {
    width: 52px;
    height: 24px;
    padding-top: 2px;
    background-color: #fff;
    border: 1px solid #c6c6c6;
    border-top: none;
    border-bottom: 2px solid #217346;
    color: #217346;
    font-size: 13px;
    font-weight: 700;
}

.add {
    width: 16px;
    height: 26px;
    margin-left: 33px;
}

.scroll-side {
    width: 40%;
    margin-left: auto;
    padding-right: 2px;
    display: flex;
}

.scroll-side .dots {
    margin-left: 7px;
}

.scroll {
    flex: 1;
    height: 14px;
    margin-top: 7px;
    display: flex;
    background-color: #fff;
    border: 1px solid #b4b4b4;
}

.scroll button {
    width: 14px;
}

.thumb {
    flex: 1;
    border-left: 1px solid #999;
}

/* status bar */
.status {
    flex: none;
    height: 22px;
    display: flex;
    align-items: center;
    background-color: #f3f3f3;
}

.ready {
    width: 3px;
    display: flex;
    justify-content: flex-end;
    overflow: hidden;
}

.macro {
    margin-left: 19px;
}

.views {
    height: 22px;
    margin-left: auto;
    padding-right: 8px;
    display: flex;
    align-items: center;
}

.view {
    width: 39px;
    height: 22px;
}

.view.on {
    background-color: #c8c8c8;
}

.zoom-box {
    margin-left: 4px;
    display: flex;
    align-items: center;
}

.zoom-btn {
    width: 16px;
    height: 22px;
}

.zoom {
    width: 100px;
    height: 22px;
    margin: 0;
    appearance: none;
    background: linear-gradient(#aaa, #aaa) no-repeat center / 100% 1px;
}

.zoom::-webkit-slider-thumb {
    appearance: none;
    width: 5px;
    height: 11px;
    background-color: #666;
}
```
